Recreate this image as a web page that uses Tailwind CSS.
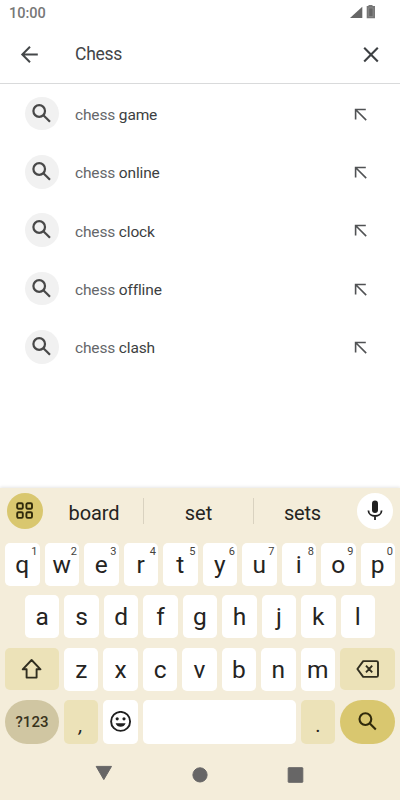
<!DOCTYPE html>
<html lang="en">
<head>
<meta charset="utf-8">
<title>Search</title>
<script src="https://cdn.jsdelivr.net/npm/@tailwindcss/browser@4"></script>
</head>
<body class="w-[400px] h-[800px] overflow-hidden bg-white font-[Roboto,sans-serif] flex flex-col">
<header class="h-[84px] shrink-0 border-b border-[#d9dadb]">
  <div class="h-[26px] flex justify-between pl-[9px] pr-[24px]">
    <span class="text-[14.5px] leading-[27px] font-medium text-[#777]">10:00</span>
    <svg class="mt-[4px]" width="26" height="15" viewBox="0 0 26 15"><path d="M0 14L12.3 2.8V14Z" fill="#666"/><path d="M18.5 1H22.5V2H25V14.3H16.7V2H18.5Z" fill="#777"/><path d="M18.7 4H23V12.6H18.7Z" fill="#666" stroke="#999" stroke-width=".6"/></svg>
  </div>
  <div class="h-[55px] flex items-center pl-[20px] pr-[20px]">
    <svg width="20" height="20" viewBox="0 0 20 20" fill="none" stroke="#444749" stroke-width="2"><path d="M17.8 10.5H2.5M10 2.8L2.3 10.5L10 18.2"/></svg>
    <div class="ml-[35px] text-[17.5px] leading-[22px] tracking-[-0.25px] text-[#434548]">Chess</div>
    <svg class="ml-auto" width="19" height="20" viewBox="0 0 19 20" stroke="#3d4043" stroke-width="2.1"><path d="M3.2 3.8L16.8 17.4M16.8 3.8L3.2 17.4"/></svg>
  </div>
</header>
<main class="h-[404px] shrink-0 pt-[0.5px]" id="results"></main>
<section class="h-[312px] shrink-0 bg-[#f4edda] shadow-[0_-1px_3px_rgba(0,0,0,0.1)] text-[#25241f]">
  <div class="h-[46px] flex items-center text-[20px] pl-[7px] pr-[7px]">
    <div class="size-[36px] rounded-full bg-[#d9c76f] flex items-center justify-center">
      <svg width="18" height="18" viewBox="0 0 18 18" fill="none" stroke="#302a0b" stroke-width="1.9"><rect x="1.2" y="1.2" width="5.6" height="5.6" rx="1.3"/><rect x="10.4" y="1.2" width="5.6" height="5.6" rx="1.3"/><rect x="1.2" y="10.3" width="5.6" height="5.6" rx="1.3"/><rect x="10.4" y="10.3" width="5.6" height="5.6" rx="1.3"/></svg>
    </div>
    <div class="w-[101px] h-[26px] leading-[30px] border-r border-[#d9d2c0] text-center pl-[2px]"><span class="tracking-[-0.1px]">board</span></div>
    <div class="w-[110px] h-[26px] leading-[30px] border-r border-[#d9d2c0] text-center">set</div>
    <div class="w-[97px] h-[26px] leading-[30px] text-center tracking-[-0.2px]">sets</div>
    <div class="ml-auto size-[36px] rounded-full bg-white flex items-center justify-center">
      <svg width="18" height="22" viewBox="0 0 18 22" fill="none" stroke="#202020" stroke-width="1.8"><rect x="6" y="0.5" width="6" height="12.6" rx="3" fill="#202020" stroke="none"/><path d="M2.4 10.5C2.6 17.8 15.4 17.8 15.6 10.5M9 16V20"/></svg>
    </div>
  </div>
  <div class="px-[5px] pt-[8.5px] flex flex-col">
    <div class="h-[42.5px] grid grid-cols-10 gap-[5px]" data-keys="qwertyuiop" data-numbers="1234567890"></div>
    <div class="h-[42.5px] mt-[10px] mx-[20px] grid grid-cols-9 gap-[5px]" data-keys="asdfghjkl"></div>
    <div class="h-[42.5px] mt-[10px] flex gap-[5px]">
      <div class="w-[54px] rounded-[5px] bg-[#ece2b8] flex items-center justify-center">
        <svg width="22" height="22" viewBox="0 0 22 22" fill="none" stroke="#302e20" stroke-width="1.9" stroke-linejoin="round"><path d="M10.6 2L1.7 11.3H5.6V19.6H15.6V11.3H19.5Z"/></svg>
      </div>
      <div class="flex-1 grid grid-cols-7 gap-[5px]" data-keys="zxcvbnm"></div>
      <div class="w-[55px] rounded-[5px] bg-[#ece2b8] flex items-center justify-center">
        <svg width="24" height="20" viewBox="0 0 24 20" fill="none" stroke="#302e20" stroke-width="1.9" stroke-linejoin="round"><path d="M7.2 2.1H20.5Q22 2.1 22 3.6V16.4Q22 17.9 20.5 17.9H7.2L1.4 10ZM10 6.7L16.2 13.3M16.2 6.7L10 13.3"/></svg>
      </div>
    </div>
    <div class="h-[44px] mt-[10px] flex gap-[5px]">
      <div class="w-[54px] rounded-[22px] bg-[#d0c6a2] text-[#39331c] flex items-center justify-center text-[15px] font-medium">?123</div>
      <div class="w-[34px] rounded-[5px] bg-[#ece2b8] text-center text-[20px] leading-[50px]"><i>,</i></div>
      <div class="w-[35px] rounded-[5px] bg-white flex items-center justify-center">
        <svg width="22" height="22" viewBox="0 0 22 22"><circle cx="10.6" cy="10.4" r="9.5" fill="none" stroke="#202020" stroke-width="1.9"/><circle cx="7.2" cy="7.8" r="1.6" fill="#202020"/><circle cx="14" cy="7.8" r="1.6" fill="#202020"/><path d="M5.6 12.2H15.6C14.2 17 7 17 5.6 12.2Z" fill="#202020"/></svg>
      </div>
      <div class="flex-1 rounded-[5px] bg-white"></div>
      <div class="w-[34px] rounded-[5px] bg-[#ece2b8] text-center text-[20px] leading-[50px]">.</div>
      <div class="w-[55px] rounded-[22px] bg-[#d9c76f] flex items-center justify-center">
        <svg width="20" height="20" viewBox="0 0 20 20" fill="none" stroke="#302a0b" stroke-width="2.1"><circle cx="7.4" cy="7.1" r="5.9"/><path d="M11.6 11.3L17.8 17.5"/></svg>
      </div>
    </div>
  </div>
  <nav class="h-[56px] pt-[21px] pl-[95px] flex items-start">
    <svg width="210" height="20" viewBox="0 0 210 20" fill="#676666" stroke="#676666" stroke-linejoin="round"><path d="M1.2 1.4H16.5L8.8 14.6Z"/><circle cx="105" cy="9.9" r="7.1"/><rect x="193.2" y="2.7" width="14.6" height="14.6" rx=".5"/></svg>
  </nav>
</section>
<script>
document.getElementById('results').innerHTML = ['game','online','clock','offline','clash'].map(word => `
<div class="h-[58.3px] flex items-center pl-[25px] pr-[32px]">
  <div class="size-[33.5px] rounded-full bg-[#f1f1f1] flex items-center justify-center">
    <svg width="20" height="20" viewBox="0 0 20 20" fill="none" stroke="#484848" stroke-width="2.2"><circle cx="7.2" cy="7" r="5.8"/><path d="M11.4 11.2L18 17.8"/></svg>
  </div>
  <div class="ml-[16.5px] mt-[3px] text-[15.5px] leading-[20px] tracking-[-0.15px] [font-variant-ligatures:common-ligatures] text-[#65676a]">chess <span class="text-[#3d3f42]">${word}</span></div>
  <svg class="ml-auto" width="14" height="14" viewBox="0 0 14 14" fill="none" stroke="#505254" stroke-width="1.6"><path d="M1.6 12.6V2.5H11.8M1.8 2.7L12.2 13.1"/></svg>
</div>`).join('');
document.querySelectorAll('[data-keys]').forEach(row => {
  row.innerHTML = [...row.dataset.keys].map((key, i) => `<div class="relative rounded-[5px] bg-white text-center text-[24.5px] leading-[43px]">${key}${row.dataset.numbers ? `<span class="absolute right-[2px] top-[3px] text-[11px] leading-[12px] text-[#44423c]">${row.dataset.numbers[i]}</span>` : ''}</div>`).join('');
});
</script>
</body>
</html>
